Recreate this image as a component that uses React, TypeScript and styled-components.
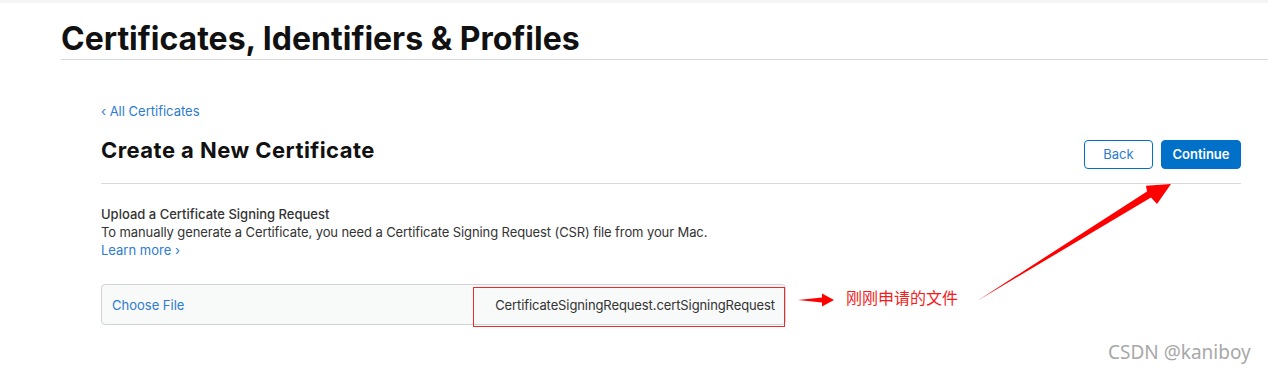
import React from "react";
import styled, { createGlobalStyle } from "styled-components";

const GlobalStyle = createGlobalStyle`
  html, body { margin: 0; padding: 0; background: #ffffff; }
  body { font-family: Inter, "Noto Sans", "Liberation Sans", sans-serif; color: #1d1d1f; }
  * { box-sizing: border-box; }
`;

const Page = styled.div`
  position: relative;
  width: 1268px;
  height: 373px;
  overflow: hidden;
`;

const TopStrip = styled.div`
  height: 3px;
  background: #f5f5f7;
`;

const Header = styled.header`
  margin-left: 61px;
  height: 57px;
  border-bottom: 1px solid #d9d9dc;
  display: flex;
  align-items: flex-end;
`;

const SiteTitle = styled.h1`
  margin: 0;
  font-size: 32px;
  line-height: 40px;
  font-weight: 700;
  letter-spacing: 0px;
  color: #111111;
`;

const Main = styled.main`
  padding: 42px 27px 0 101px;
`;

const BackLink = styled.a`
  display: block;
  font-size: 13px;
  line-height: 18px;
  color: #2d7bd0;
  text-decoration: none;
`;

const TitleRow = styled.div`
  margin-top: 16px;
  padding-bottom: 14px;
  border-bottom: 1px solid #d9d9dc;
  display: flex;
  justify-content: space-between;
  align-items: flex-start;
`;

const PageTitle = styled.h2`
  margin: 0;
  font-size: 22px;
  line-height: 28px;
  font-weight: 700;
  letter-spacing: 0.45px;
  color: #111111;
`;

const Buttons = styled.div`
  margin-top: 4px;
  display: flex;
  gap: 8px;
`;

const Button = styled.button<{ $primary?: boolean }>`
  width: ${(p) => (p.$primary ? "80px" : "69px")};
  height: 29px;
  padding: 0 0 2px 0;
  border-radius: 4px;
  border: 1px solid #0070c9;
  background: ${(p) => (p.$primary ? "#0070c9" : "#ffffff")};
  color: ${(p) => (p.$primary ? "#ffffff" : "#2d7bd0")};
  font-family: Inter, "Liberation Sans", sans-serif;
  font-size: 13px;
  font-weight: ${(p) => (p.$primary ? 600 : 400)};
  cursor: pointer;
`;

const Section = styled.section`
  margin-top: 21px;
`;

const Label = styled.div`
  font-size: 13px;
  line-height: 18px;
  font-weight: 500;
  color: #333333;
`;

const Text = styled.div`
  font-size: 13px;
  line-height: 18px;
  color: #333333;
  letter-spacing: -0.1px;
`;

const Learn = styled.a`
  display: block;
  font-size: 13px;
  line-height: 18px;
  color: #2d7bd0;
  text-decoration: none;
`;

const FileBox = styled.div`
  position: relative;
  margin-top: 25px;
  width: 685px;
  height: 41px;
  border: 1px solid #d2d2d7;
  border-radius: 4px;
  background: #f8f9f9;
  display: flex;
  align-items: center;
  justify-content: space-between;
  padding: 0 10px 0 10px;
`;

const ChooseFile = styled.span`
  font-size: 13px;
  color: #2d7bd0;
`;

const FileName = styled.span`
  font-size: 13px;
  color: #333333;
  letter-spacing: -0.1px;
`;

const Highlight = styled.div`
  position: absolute;
  left: 371px;
  top: 2px;
  width: 312px;
  height: 40px;
  border: 1px solid #ee2b2b;
  pointer-events: none;
`;

const Overlay = styled.svg`
  position: absolute;
  left: 0;
  top: 0;
  pointer-events: none;
`;

const Note = styled.div`
  position: absolute;
  left: 846px;
  top: 286px;
  font-family: "Noto Sans CJK SC", sans-serif;
  font-size: 16px;
  line-height: 22px;
  color: #f51c1c;
`;

const Watermark = styled.div`
  position: absolute;
  left: 1108px;
  top: 339px;
  font-family: "Noto Sans", "Liberation Sans", sans-serif;
  font-size: 19px;
  line-height: 26px;
  color: #a8a8a8;
`;

export default function App() {
  return (
    <Page>
      <GlobalStyle />
      <TopStrip />
      <Header>
        <SiteTitle>Certificates, Identifiers &amp; Profiles</SiteTitle>
      </Header>
      <Main>
        <BackLink href="#">‹ All Certificates</BackLink>
        <TitleRow>
          <PageTitle>Create a New Certificate</PageTitle>
          <Buttons>
            <Button>Back</Button>
            <Button $primary>Continue</Button>
          </Buttons>
        </TitleRow>
        <Section>
          <Label>Upload a Certificate Signing Request</Label>
          <Text>
            To manually generate a Certificate, you need a Certificate Signing Request (CSR) file from your Mac.
          </Text>
          <Learn href="#">Learn more ›</Learn>
          <FileBox>
            <ChooseFile>Choose File</ChooseFile>
            <FileName>CertificateSigningRequest.certSigningRequest</FileName>
            <Highlight />
          </FileBox>
        </Section>
      </Main>
      <Overlay width="1268" height="373" viewBox="0 0 1268 373">
        <polygon points="798,300 822,297.6 822,293.5 834,300 822,306.5 822,302.4" fill="#ff0000" />
        <polygon points="977,301 1147,191.5 1146,185.7 1171,184 1157,204 1151,197.5" fill="#ff0000" />
      </Overlay>
      <Note>刚刚申请的文件</Note>
      <Watermark>CSDN @kaniboy</Watermark>
    </Page>
  );
}
